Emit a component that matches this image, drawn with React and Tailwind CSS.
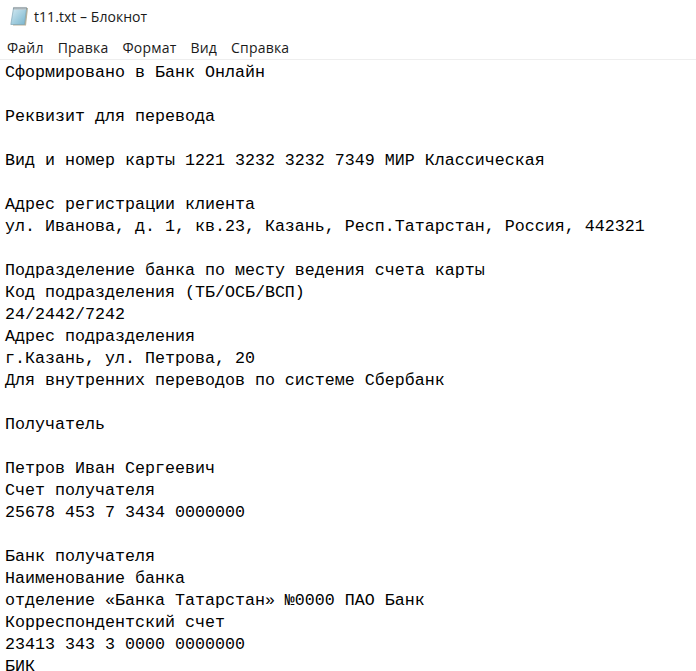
import React from 'react';

const lines = [
  'Сформировано в Банк Онлайн',
  '',
  'Реквизит для перевода',
  '',
  'Вид и номер карты 1221 3232 3232 7349 МИР Классическая',
  '',
  'Адрес регистрации клиента',
  'ул. Иванова, д. 1, кв.23, Казань, Респ.Татарстан, Россия, 442321',
  '',
  'Подразделение банка по месту ведения счета карты',
  'Код подразделения (ТБ/ОСБ/ВСП)',
  '24/2442/7242',
  'Адрес подразделения',
  'г.Казань, ул. Петрова, 20',
  'Для внутренних переводов по системе Сбербанк',
  '',
  'Получатель',
  '',
  'Петров Иван Сергеевич',
  'Счет получателя',
  '25678 453 7 3434 0000000',
  '',
  'Банк получателя',
  'Наименование банка',
  'отделение «Банка Татарстан» №0000 ПАО Банк',
  'Корреспондентский счет',
  '23413 343 3 0000 0000000',
  'БИК',
];

const menu = ['Файл', 'Правка', 'Формат', 'Вид', 'Справка'];

const NotepadIcon = () => (
  <svg width="18" height="20" viewBox="0 0 18 20" className="shrink-0">
    <defs>
      <linearGradient id="pad" x1="0" y1="0" x2="1" y2="1">
        <stop offset="0" stopColor="#d6ebf3" />
        <stop offset="1" stopColor="#76b4cd" />
      </linearGradient>
    </defs>
    {/* page shadow */}
    <path d="M5 2 H18 L16 19.5 H3 Z" fill="#b9b29a" />
    {/* page */}
    <path d="M3.5 2 H16.5 L14.5 18.5 H0.8 Z" fill="url(#pad)" stroke="#7fa6b6" strokeWidth="0.7" />
    {/* binding */}
    <path d="M3.5 1 H16.5 V3.5 H3.5 Z" fill="#7d8a91" />
    <path d="M5 0.5 V4 M7 0.5 V4 M9 0.5 V4 M11 0.5 V4 M13 0.5 V4 M15 0.5 V4" stroke="#eef3f5" strokeWidth="0.8" />
  </svg>
);

export default function App() {
  return (
    <div className="h-[671px] w-[696px] overflow-hidden bg-white">
      <div className="flex h-[35px] items-center gap-[6px] pb-[3px] pl-[10px] font-['Open_Sans','Noto_Sans',sans-serif] text-[14px] text-[#1a1a1a]">
        <NotepadIcon />
        <span className="tracking-[0.05px]">t11.txt – Блокнот</span>
      </div>
      <div className="flex h-[24px] items-center gap-[14px] pl-[7px] pt-[1px] font-['Open_Sans','Noto_Sans',sans-serif] text-[14px] tracking-[0.2px] text-[#1a1a1a]">
        {menu.map((item) => (
          <span key={item}>{item}</span>
        ))}
      </div>
      <div className="h-px bg-[#eeeeee]" />
      <div className="whitespace-pre pl-[5px] pt-[2px] font-['Liberation_Mono',monospace] text-[16.67px] leading-[22px] text-black">
        {lines.map((line, i) => (
          <div key={i} className="h-[22px]">
            {line}
          </div>
        ))}
      </div>
    </div>
  );
}
